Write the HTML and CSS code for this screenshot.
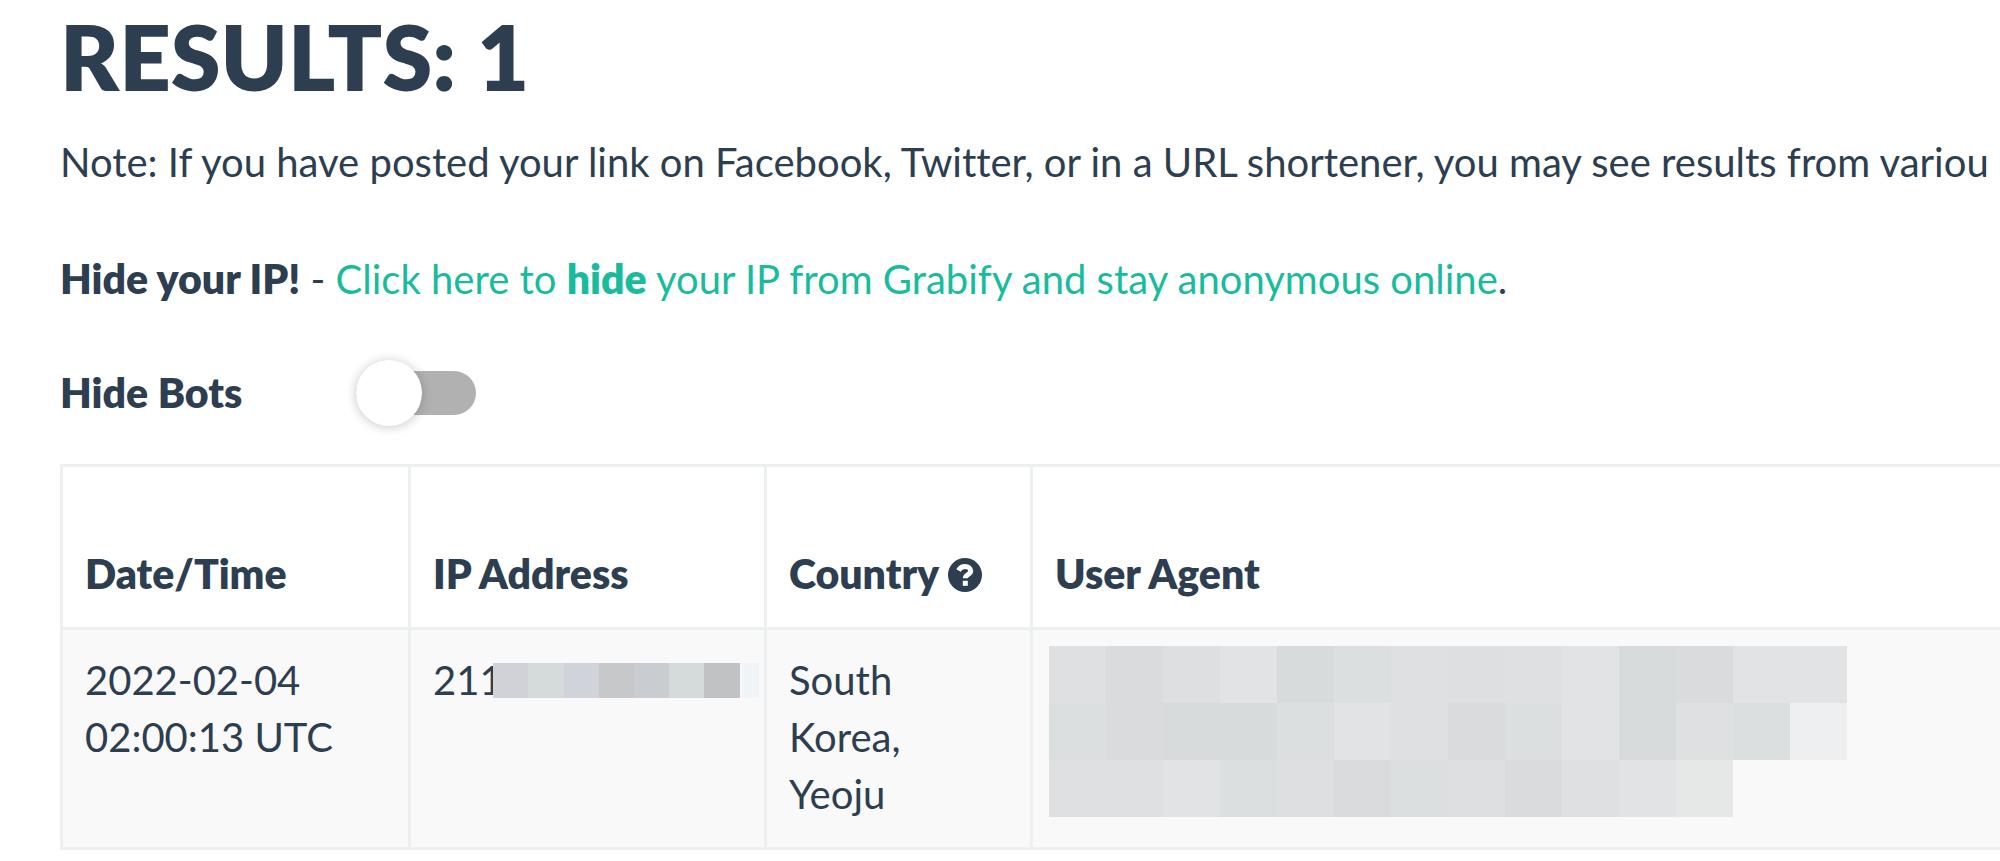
FILE: index.html
```
<!DOCTYPE html>
<html lang="en">
<head>
<meta charset="utf-8">
<title>Results</title>
<link rel="stylesheet" href="styles.css">
</head>
<body>
<main class="page">
  <h1 class="title">RESULTS: 1</h1>
  <p class="note">Note: If you have posted your link on Facebook, Twitter, or in a URL shortener, you may see results from variou</p>
  <p class="tip"><strong>Hide your IP!</strong> - <a class="link" href="#hide">Click here to <strong>hide</strong> your IP from Grabify and stay anonymous online</a>.</p>
  <div class="bots">
    <label class="bots-label" for="hide-bots">Hide Bots</label>
    <input class="switch" type="checkbox" id="hide-bots">
  </div>
  <table class="results">
    <colgroup><col class="col-date"><col class="col-ip"><col class="col-country"><col></colgroup>
    <thead>
      <tr>
        <th scope="col">Date/Time</th>
        <th scope="col">IP Address</th>
        <th scope="col">Country <svg class="help" viewBox="0 0 34 34" role="img" aria-label="Help"><circle cx="17" cy="17" r="17" fill="currentColor"/><path d="M10.500 12.500C12 9.700 14.200 8.500 17 8.500C20.500 8.500 22.700 10.500 22.700 13C22.700 16.500 17.300 16.500 17.300 20.300" fill="none" stroke="#fff" stroke-width="5"/><rect x="14.800" y="22.800" width="5" height="5" fill="#fff"/></svg></th>
        <th scope="col">User Agent</th>
      </tr>
    </thead>
    <tbody>
      <tr>
        <td>2022-02-04 02:00:13 UTC</td>
        <td class="ip">211<svg class="mask-ip" viewBox="0 0 266 35" preserveAspectRatio="none" shape-rendering="crispEdges" aria-hidden="true"><path fill="#d1d2d7" d="M0 0h35v35H0z"/><path fill="#d5dada" d="M35 0h36v35H35z"/><path fill="#d0d3d9" d="M71 0h35v35H71z"/><path fill="#c7c8ca" d="M106 0h35v35h-35z"/><path fill="#c9cdd1" d="M141 0h35v35h-35z"/><path fill="#d5dada" d="M176 0h35v35h-35z"/><path fill="#c1c2c4" d="M211 0h36v35h-36z"/><path fill="#eff4f6" d="M249 0h17v35h-17z"/></svg></td>
        <td>South<br>Korea,<br>Yeoju</td>
        <td class="agent"><svg class="mask-agent" viewBox="0 0 14 3" shape-rendering="crispEdges" aria-hidden="true">
          <path fill="#dfe0e2" d="M0 0h14v1H0zM0 1h13v1H0zM0 2h12v1H0z"/>
          <path fill="#dadbdd" d="M1 0h1v2H1zM11 0h1v1h-1zM7 1h1v1H7zM5 2h1v1H5zM8 2h1v1H8z"/>
          <path fill="#dddfe0" d="M2 0h1v1H2zM7 0h1v1H7zM4 2h1v1H4zM7 2h1v1H7z"/>
          <path fill="#e2e3e5" d="M3 0h1v1H3zM9 0h1v2H9zM12 0h2v1h-2zM5 1h1v1H5zM2 2h1v1H2zM10 2h1v1h-1z"/>
          <path fill="#d7dbdc" d="M4 0h1v1H4zM10 0h1v2h-1zM2 1h1v1H2z"/>
          <path fill="#d8dbdc" d="M3 1h1v1H3z"/>
          <path fill="#dbdfe0" d="M5 0h1v1H5zM0 1h1v1H0zM4 1h1v1H4zM8 1h1v1H8zM12 1h1v1h-1zM3 2h1v1H3zM6 2h1v1H6z"/>
          <path fill="#edeff1" d="M13 1h1v1h-1z"/>
          <path fill="#e6e8e7" d="M11 2h1v1h-1z"/>
        </svg></td>
      </tr>
    </tbody>
  </table>
</main>
</body>
</html>
```
FILE: styles.css
```
* { box-sizing: border-box; }

body {
  margin: 0;
  background: #fff;
  color: #2c3e50;
  font: 400 40px/57px Lato, sans-serif;
  font-variant-ligatures: none;
}

.page {
  padding: 6px 0 8px 60px;
  overflow: hidden;
}

strong,
.bots-label,
.results th {
  font-size: 41px;
  font-weight: 800;
}

.title {
  margin: 0 0 28px;
  font-size: 90px;
  font-weight: 800;
  line-height: 100px;
}

.note {
  margin: 0 0 59px;
  white-space: nowrap;
}

.tip { margin: 0 0 56px; }

.link {
  color: #18bc9c;
  text-decoration: none;
}

.bots {
  display: flex;
  align-items: center;
  gap: 114px;
  margin-bottom: 43px;
}

.switch {
  appearance: none;
  display: flex;
  align-items: center;
  width: 120px;
  height: 44px;
  margin: 0;
  border-radius: 22px;
  background: #b1b1b1;
}

.switch::before {
  content: "";
  width: 66px;
  height: 66px;
  border-radius: 50%;
  background: #fff;
  box-shadow: 0 1px 8px 2px rgba(44, 62, 80, 0.2);
}

.switch:checked { background: #18bc9c; }
.switch:checked::before { margin-left: auto; }

.results {
  width: 100%;
  table-layout: fixed;
  border-collapse: collapse;
  border-right: 0;
}

.col-date { width: 348px; }
.col-ip { width: 356px; }
.col-country { width: 266px; }

.results th,
.results td {
  border: 3px solid #ecf0f1;
  padding: 22px 22px 24px;
  text-align: left;
  vertical-align: top;
}

.results th {
  padding-top: 78px;
  padding-bottom: 25px;
}

.results th:last-child,
.results td:last-child { border-right: 0; }

.results tbody { background: #f9f9f9; }

.results .ip {
  padding-right: 0;
  white-space: nowrap;
}

.help {
  width: 34px;
  height: 34px;
  vertical-align: -3px;
}

.mask-ip {
  width: 266px;
  height: 35px;
  margin-left: -10px;
  vertical-align: -3px;
}

.results .agent { padding: 16px; }

.mask-agent {
  display: block;
  width: 798px;
  height: 171px;
}
```
